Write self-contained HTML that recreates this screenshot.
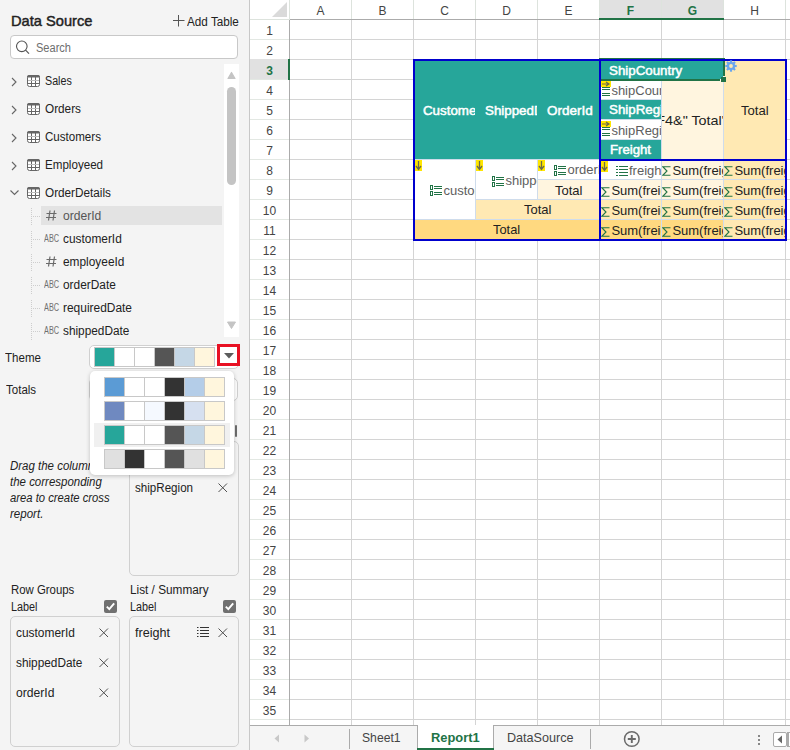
<!DOCTYPE html><html><head><meta charset="utf-8"><style>
html,body{margin:0;padding:0;width:790px;height:750px;overflow:hidden;background:#fff;font-family:"Liberation Sans",sans-serif;}
div{box-sizing:border-box;}
</style></head><body>
<div style="position:absolute;left:0px;top:0px;width:249px;height:750px;background:#f4f4f4;"></div>
<div style="position:absolute;left:249px;top:0px;width:1px;height:750px;background:#c8c8c8;"></div>
<div style="position:absolute;left:11.00px;top:12px;font-size:15px;line-height:17px;white-space:nowrap;color:#222;transform:scaleX(0.9760);transform-origin:0 0;-webkit-text-stroke:0.45px #222;">Data Source</div>
<svg style="position:absolute;left:172px;top:14px" width="14" height="14"><path d="M6.5 1V12.5M1 6.5H12.5" stroke="#555" stroke-width="1"/></svg>
<div style="position:absolute;left:187.00px;top:15px;font-size:12.5px;line-height:14px;white-space:nowrap;color:#222;transform:scaleX(0.9369);transform-origin:0 0;">Add Table</div>
<div style="position:absolute;left:10px;top:35px;width:228px;height:24px;background:#fff;border:1px solid #c8c8c8;border-radius:4px;"></div>
<svg style="position:absolute;left:14px;top:39px" width="18" height="18"><circle cx="7.8" cy="7.3" r="5.3" stroke="#555" stroke-width="1.1" fill="none"/><path d="M11.6 11.1L15 14.6" stroke="#555" stroke-width="1.2"/></svg>
<div style="position:absolute;left:36.00px;top:41px;font-size:12px;line-height:14px;white-space:nowrap;color:#6e6e6e;transform:scaleX(0.9211);transform-origin:0 0;">Search</div>
<div style="position:absolute;left:224px;top:64px;width:15px;height:273px;background:#fff;"></div>
<svg style="position:absolute;left:224px;top:64px" width="15" height="273"><path d="M4 14.5L7.5 8.5L11 14.5Z" fill="#c4c4c4" stroke="#c4c4c4" stroke-width="1.2" stroke-linejoin="round"/><rect x="3" y="23" width="9" height="98" rx="4.5" fill="#c4c4c4"/><path d="M3.5 258L7.5 264.5L11.5 258Z" fill="#c4c4c4" stroke="#c4c4c4" stroke-width="1" stroke-linejoin="round"/></svg>
<svg style="position:absolute;left:11px;top:77px" width="8" height="10"><path d="M1 1L5 5L1 9" stroke="#666" stroke-width="1.1" fill="none"/></svg>
<svg style="position:absolute;left:27px;top:75px" width="13" height="12"><rect x="0.5" y="0.5" width="12" height="11" rx="2" fill="#fff" stroke="#666" stroke-width="1"/><path d="M0 2.5V2A2 2 0 0 1 2 0H11A2 2 0 0 1 13 2V2.5Z" fill="#666"/><path d="M0.5 8.5H12.5M4.5 2V12M8.5 2V12" stroke="#666" stroke-width="1"/><path d="M1 5.5H12" stroke="#bbb" stroke-width="1"/></svg>
<div style="position:absolute;left:45.00px;top:74px;font-size:12.5px;line-height:14px;white-space:nowrap;color:#222;transform:scaleX(0.8576);transform-origin:0 0;">Sales</div>
<svg style="position:absolute;left:11px;top:105px" width="8" height="10"><path d="M1 1L5 5L1 9" stroke="#666" stroke-width="1.1" fill="none"/></svg>
<svg style="position:absolute;left:27px;top:103px" width="13" height="12"><rect x="0.5" y="0.5" width="12" height="11" rx="2" fill="#fff" stroke="#666" stroke-width="1"/><path d="M0 2.5V2A2 2 0 0 1 2 0H11A2 2 0 0 1 13 2V2.5Z" fill="#666"/><path d="M0.5 8.5H12.5M4.5 2V12M8.5 2V12" stroke="#666" stroke-width="1"/><path d="M1 5.5H12" stroke="#bbb" stroke-width="1"/></svg>
<div style="position:absolute;left:45.00px;top:102px;font-size:12.5px;line-height:14px;white-space:nowrap;color:#222;transform:scaleX(0.9412);transform-origin:0 0;">Orders</div>
<svg style="position:absolute;left:11px;top:133px" width="8" height="10"><path d="M1 1L5 5L1 9" stroke="#666" stroke-width="1.1" fill="none"/></svg>
<svg style="position:absolute;left:27px;top:131px" width="13" height="12"><rect x="0.5" y="0.5" width="12" height="11" rx="2" fill="#fff" stroke="#666" stroke-width="1"/><path d="M0 2.5V2A2 2 0 0 1 2 0H11A2 2 0 0 1 13 2V2.5Z" fill="#666"/><path d="M0.5 8.5H12.5M4.5 2V12M8.5 2V12" stroke="#666" stroke-width="1"/><path d="M1 5.5H12" stroke="#bbb" stroke-width="1"/></svg>
<div style="position:absolute;left:45.00px;top:130px;font-size:12.5px;line-height:14px;white-space:nowrap;color:#222;transform:scaleX(0.9256);transform-origin:0 0;">Customers</div>
<svg style="position:absolute;left:11px;top:161px" width="8" height="10"><path d="M1 1L5 5L1 9" stroke="#666" stroke-width="1.1" fill="none"/></svg>
<svg style="position:absolute;left:27px;top:159px" width="13" height="12"><rect x="0.5" y="0.5" width="12" height="11" rx="2" fill="#fff" stroke="#666" stroke-width="1"/><path d="M0 2.5V2A2 2 0 0 1 2 0H11A2 2 0 0 1 13 2V2.5Z" fill="#666"/><path d="M0.5 8.5H12.5M4.5 2V12M8.5 2V12" stroke="#666" stroke-width="1"/><path d="M1 5.5H12" stroke="#bbb" stroke-width="1"/></svg>
<div style="position:absolute;left:45.00px;top:158px;font-size:12.5px;line-height:14px;white-space:nowrap;color:#222;transform:scaleX(0.9280);transform-origin:0 0;">Employeed</div>
<svg style="position:absolute;left:10px;top:189px" width="12" height="8"><path d="M0.5 1.5L4.5 5.5L8.5 1.5" stroke="#666" stroke-width="1.1" fill="none"/></svg>
<svg style="position:absolute;left:27px;top:187px" width="13" height="12"><rect x="0.5" y="0.5" width="12" height="11" rx="2" fill="#fff" stroke="#666" stroke-width="1"/><path d="M0 2.5V2A2 2 0 0 1 2 0H11A2 2 0 0 1 13 2V2.5Z" fill="#666"/><path d="M0.5 8.5H12.5M4.5 2V12M8.5 2V12" stroke="#666" stroke-width="1"/><path d="M1 5.5H12" stroke="#bbb" stroke-width="1"/></svg>
<div style="position:absolute;left:45.00px;top:186px;font-size:12.5px;line-height:14px;white-space:nowrap;color:#222;transform:scaleX(0.9395);transform-origin:0 0;">OrderDetails</div>
<div style="position:absolute;left:41px;top:206px;width:181px;height:19px;background:#e3e3e3;"></div>
<div style="position:absolute;left:31px;top:208px;width:1px;height:17px;border-left:1px dotted #cdcdcd;"></div>
<div style="position:absolute;left:33px;top:216px;width:7px;height:1px;border-top:1px dotted #cdcdcd;"></div>
<svg style="position:absolute;left:46px;top:210px" width="11" height="11"><path d="M4 0.5L2.5 10.5M8.5 0.5L7 10.5M0.5 3.5H10.5M0 7.5H10" stroke="#6a6a6a" stroke-width="1.2"/></svg>
<div style="position:absolute;left:63.00px;top:209px;font-size:12.5px;line-height:14px;white-space:nowrap;color:#555;transform:scaleX(0.9671);transform-origin:0 0;">orderId</div>
<div style="position:absolute;left:31px;top:231px;width:1px;height:17px;border-left:1px dotted #cdcdcd;"></div>
<div style="position:absolute;left:33px;top:239px;width:7px;height:1px;border-top:1px dotted #cdcdcd;"></div>
<div style="position:absolute;left:44.00px;top:233px;font-size:10px;line-height:11px;white-space:nowrap;color:#707070;transform:scaleX(0.7317);transform-origin:0 0;">ABC</div>
<div style="position:absolute;left:63.00px;top:232px;font-size:12.5px;line-height:14px;white-space:nowrap;color:#222;transform:scaleX(0.9506);transform-origin:0 0;">customerId</div>
<div style="position:absolute;left:31px;top:254px;width:1px;height:17px;border-left:1px dotted #cdcdcd;"></div>
<div style="position:absolute;left:33px;top:262px;width:7px;height:1px;border-top:1px dotted #cdcdcd;"></div>
<svg style="position:absolute;left:46px;top:256px" width="11" height="11"><path d="M4 0.5L2.5 10.5M8.5 0.5L7 10.5M0.5 3.5H10.5M0 7.5H10" stroke="#6a6a6a" stroke-width="1.2"/></svg>
<div style="position:absolute;left:63.00px;top:255px;font-size:12.5px;line-height:14px;white-space:nowrap;color:#222;transform:scaleX(0.9498);transform-origin:0 0;">employeeId</div>
<div style="position:absolute;left:31px;top:277px;width:1px;height:17px;border-left:1px dotted #cdcdcd;"></div>
<div style="position:absolute;left:33px;top:285px;width:7px;height:1px;border-top:1px dotted #cdcdcd;"></div>
<div style="position:absolute;left:44.00px;top:279px;font-size:10px;line-height:11px;white-space:nowrap;color:#707070;transform:scaleX(0.7317);transform-origin:0 0;">ABC</div>
<div style="position:absolute;left:63.00px;top:278px;font-size:12.5px;line-height:14px;white-space:nowrap;color:#222;transform:scaleX(0.9514);transform-origin:0 0;">orderDate</div>
<div style="position:absolute;left:31px;top:300px;width:1px;height:17px;border-left:1px dotted #cdcdcd;"></div>
<div style="position:absolute;left:33px;top:308px;width:7px;height:1px;border-top:1px dotted #cdcdcd;"></div>
<div style="position:absolute;left:44.00px;top:302px;font-size:10px;line-height:11px;white-space:nowrap;color:#707070;transform:scaleX(0.7317);transform-origin:0 0;">ABC</div>
<div style="position:absolute;left:63.00px;top:301px;font-size:12.5px;line-height:14px;white-space:nowrap;color:#222;transform:scaleX(0.9550);transform-origin:0 0;">requiredDate</div>
<div style="position:absolute;left:31px;top:323px;width:1px;height:17px;border-left:1px dotted #cdcdcd;"></div>
<div style="position:absolute;left:33px;top:331px;width:7px;height:1px;border-top:1px dotted #cdcdcd;"></div>
<div style="position:absolute;left:44.00px;top:325px;font-size:10px;line-height:11px;white-space:nowrap;color:#707070;transform:scaleX(0.7317);transform-origin:0 0;">ABC</div>
<div style="position:absolute;left:63.00px;top:324px;font-size:12.5px;line-height:14px;white-space:nowrap;color:#222;transform:scaleX(0.9452);transform-origin:0 0;">shippedDate</div>
<div style="position:absolute;left:5.00px;top:351px;font-size:12.5px;line-height:14px;white-space:nowrap;color:#222;transform:scaleX(0.9231);transform-origin:0 0;">Theme</div>
<div style="position:absolute;left:89px;top:345px;width:150px;height:24px;background:#fff;border:1px solid #d0d0d0;border-radius:5px;"></div>
<div style="position:absolute;left:94px;top:347px;width:121px;height:20px;background:#c8c8c8;"></div>
<div style="position:absolute;left:95px;top:348px;width:19px;height:18px;background:#26a69a;"></div>
<div style="position:absolute;left:115px;top:348px;width:19px;height:18px;background:#ffffff;"></div>
<div style="position:absolute;left:135px;top:348px;width:19px;height:18px;background:#ffffff;"></div>
<div style="position:absolute;left:155px;top:348px;width:19px;height:18px;background:#555555;"></div>
<div style="position:absolute;left:175px;top:348px;width:19px;height:18px;background:#c5d7e6;"></div>
<div style="position:absolute;left:195px;top:348px;width:19px;height:18px;background:#fff6dd;"></div>
<div style="position:absolute;left:217px;top:344px;width:23px;height:22px;background:#fff;border:3px solid #e81123;"></div>
<svg style="position:absolute;left:223px;top:352px" width="12" height="8"><path d="M1 1H11L6 6.5Z" fill="#5c5c5c"/></svg>
<div style="position:absolute;left:6.00px;top:383px;font-size:12.5px;line-height:14px;white-space:nowrap;color:#222;transform:scaleX(0.9221);transform-origin:0 0;">Totals</div>
<div style="position:absolute;left:89px;top:378px;width:149px;height:23px;background:#fff;border:1px solid #d0d0d0;border-radius:5px;"></div>
<div style="position:absolute;left:235px;top:425px;width:2px;height:12px;background:#6e6e6e;border-radius:1px;"></div>
<div style="position:absolute;left:129px;top:441px;width:110px;height:135px;border:1px solid #d0d0d0;border-radius:5px;"></div>
<div style="position:absolute;left:135.00px;top:481px;font-size:12.5px;line-height:14px;white-space:nowrap;color:#222;transform:scaleX(0.9280);transform-origin:0 0;">shipRegion</div>
<svg style="position:absolute;left:218px;top:483px" width="10" height="10"><path d="M0.5 0.5L9 9M9 0.5L0.5 9" stroke="#505050" stroke-width="1"/></svg>
<div style="position:absolute;left:10.00px;top:459px;font-size:12.5px;line-height:14px;white-space:nowrap;color:#222;font-style:italic;transform:scaleX(0.9177);transform-origin:0 0;">Drag the columns to</div>
<div style="position:absolute;left:10.00px;top:475px;font-size:12.5px;line-height:14px;white-space:nowrap;color:#222;font-style:italic;transform:scaleX(0.9177);transform-origin:0 0;">the corresponding</div>
<div style="position:absolute;left:10.00px;top:491px;font-size:12.5px;line-height:14px;white-space:nowrap;color:#222;font-style:italic;transform:scaleX(0.9014);transform-origin:0 0;">area to create cross</div>
<div style="position:absolute;left:10.00px;top:507px;font-size:12.5px;line-height:14px;white-space:nowrap;color:#222;font-style:italic;transform:scaleX(0.9241);transform-origin:0 0;">report.</div>
<div style="position:absolute;left:90px;top:371px;width:144px;height:104px;background:#fff;border-radius:5px;box-shadow:0 1px 4px rgba(0,0,0,0.22);"></div>
<div style="position:absolute;left:94px;top:423px;width:136px;height:24px;background:#f0f0f0;"></div>
<div style="position:absolute;left:104px;top:377px;width:121px;height:20px;background:#c8c8c8;"></div>
<div style="position:absolute;left:105px;top:378px;width:19px;height:18px;background:#5b9bd5;"></div>
<div style="position:absolute;left:125px;top:378px;width:19px;height:18px;background:#ffffff;"></div>
<div style="position:absolute;left:145px;top:378px;width:19px;height:18px;background:#ffffff;"></div>
<div style="position:absolute;left:165px;top:378px;width:19px;height:18px;background:#333333;"></div>
<div style="position:absolute;left:185px;top:378px;width:19px;height:18px;background:#b4cde8;"></div>
<div style="position:absolute;left:205px;top:378px;width:19px;height:18px;background:#fff6dd;"></div>
<div style="position:absolute;left:104px;top:401px;width:121px;height:20px;background:#c8c8c8;"></div>
<div style="position:absolute;left:105px;top:402px;width:19px;height:18px;background:#6f89c0;"></div>
<div style="position:absolute;left:125px;top:402px;width:19px;height:18px;background:#ffffff;"></div>
<div style="position:absolute;left:145px;top:402px;width:19px;height:18px;background:#f5f9ff;"></div>
<div style="position:absolute;left:165px;top:402px;width:19px;height:18px;background:#333333;"></div>
<div style="position:absolute;left:185px;top:402px;width:19px;height:18px;background:#d6e0f0;"></div>
<div style="position:absolute;left:205px;top:402px;width:19px;height:18px;background:#fff6dd;"></div>
<div style="position:absolute;left:104px;top:425px;width:121px;height:20px;background:#c8c8c8;"></div>
<div style="position:absolute;left:105px;top:426px;width:19px;height:18px;background:#26a69a;"></div>
<div style="position:absolute;left:125px;top:426px;width:19px;height:18px;background:#ffffff;"></div>
<div style="position:absolute;left:145px;top:426px;width:19px;height:18px;background:#ffffff;"></div>
<div style="position:absolute;left:165px;top:426px;width:19px;height:18px;background:#555555;"></div>
<div style="position:absolute;left:185px;top:426px;width:19px;height:18px;background:#c5d7e6;"></div>
<div style="position:absolute;left:205px;top:426px;width:19px;height:18px;background:#fff6dd;"></div>
<div style="position:absolute;left:104px;top:449px;width:121px;height:20px;background:#c8c8c8;"></div>
<div style="position:absolute;left:105px;top:450px;width:19px;height:18px;background:#e0e0e0;"></div>
<div style="position:absolute;left:125px;top:450px;width:19px;height:18px;background:#333333;"></div>
<div style="position:absolute;left:145px;top:450px;width:19px;height:18px;background:#ffffff;"></div>
<div style="position:absolute;left:165px;top:450px;width:19px;height:18px;background:#555555;"></div>
<div style="position:absolute;left:185px;top:450px;width:19px;height:18px;background:#e0e0e0;"></div>
<div style="position:absolute;left:205px;top:450px;width:19px;height:18px;background:#fff6dd;"></div>
<div style="position:absolute;left:11.00px;top:583px;font-size:12.5px;line-height:14px;white-space:nowrap;color:#222;transform:scaleX(0.9108);transform-origin:0 0;">Row Groups</div>
<div style="position:absolute;left:11.00px;top:600px;font-size:12.5px;line-height:14px;white-space:nowrap;color:#222;transform:scaleX(0.8656);transform-origin:0 0;">Label</div>
<div style="position:absolute;left:104px;top:600px;width:13px;height:13px;background:#707070;border-radius:2px;"></div>
<svg style="position:absolute;left:104px;top:600px" width="13" height="13"><path d="M2.8 6.6L5.3 9.2L10.2 3.3" stroke="#fff" stroke-width="1.9" fill="none"/></svg>
<div style="position:absolute;left:10px;top:616px;width:110px;height:131px;border:1px solid #d0d0d0;border-radius:5px;"></div>
<div style="position:absolute;left:16.00px;top:626px;font-size:12.5px;line-height:14px;white-space:nowrap;color:#222;transform:scaleX(0.9538);transform-origin:0 0;">customerId</div>
<svg style="position:absolute;left:99px;top:628px" width="10" height="10"><path d="M0.5 0.5L9 9M9 0.5L0.5 9" stroke="#505050" stroke-width="1"/></svg>
<div style="position:absolute;left:16.00px;top:656px;font-size:12.5px;line-height:14px;white-space:nowrap;color:#222;transform:scaleX(0.9452);transform-origin:0 0;">shippedDate</div>
<svg style="position:absolute;left:99px;top:658px" width="10" height="10"><path d="M0.5 0.5L9 9M9 0.5L0.5 9" stroke="#505050" stroke-width="1"/></svg>
<div style="position:absolute;left:16.00px;top:686px;font-size:12.5px;line-height:14px;white-space:nowrap;color:#222;transform:scaleX(0.9696);transform-origin:0 0;">orderId</div>
<svg style="position:absolute;left:99px;top:688px" width="10" height="10"><path d="M0.5 0.5L9 9M9 0.5L0.5 9" stroke="#505050" stroke-width="1"/></svg>
<div style="position:absolute;left:130.00px;top:583px;font-size:12.5px;line-height:14px;white-space:nowrap;color:#222;transform:scaleX(0.9429);transform-origin:0 0;">List / Summary</div>
<div style="position:absolute;left:130.00px;top:600px;font-size:12.5px;line-height:14px;white-space:nowrap;color:#222;transform:scaleX(0.8656);transform-origin:0 0;">Label</div>
<div style="position:absolute;left:223px;top:600px;width:13px;height:13px;background:#707070;border-radius:2px;"></div>
<svg style="position:absolute;left:223px;top:600px" width="13" height="13"><path d="M2.8 6.6L5.3 9.2L10.2 3.3" stroke="#fff" stroke-width="1.9" fill="none"/></svg>
<div style="position:absolute;left:129px;top:616px;width:110px;height:131px;border:1px solid #d0d0d0;border-radius:5px;"></div>
<div style="position:absolute;left:135.00px;top:626px;font-size:12.5px;line-height:14px;white-space:nowrap;color:#222;transform:scaleX(1.0072);transform-origin:0 0;">freight</div>
<svg style="position:absolute;left:196px;top:626px" width="14" height="12"><path d="M1 1.5H2.5M1 4.5H2.5M1 7.5H2.5M1 10.5H2.5M4 1.5H13M4 4.5H13M4 7.5H13M4 10.5H13" stroke="#333" stroke-width="1"/></svg>
<svg style="position:absolute;left:218px;top:628px" width="10" height="10"><path d="M0.5 0.5L9 9M9 0.5L0.5 9" stroke="#505050" stroke-width="1"/></svg>
<div style="position:absolute;left:250px;top:0px;width:540px;height:725px;background:#fff;"></div>
<div style="position:absolute;left:599px;top:0px;width:125px;height:18px;background:#e1e1e1;"></div>
<div style="position:absolute;left:289px;top:0px;width:1px;height:19px;background:#dde3dd;"></div>
<div style="position:absolute;left:351px;top:0px;width:1px;height:19px;background:#dde3dd;"></div>
<div style="position:absolute;left:413px;top:0px;width:1px;height:19px;background:#dde3dd;"></div>
<div style="position:absolute;left:475px;top:0px;width:1px;height:19px;background:#dde3dd;"></div>
<div style="position:absolute;left:537px;top:0px;width:1px;height:19px;background:#dde3dd;"></div>
<div style="position:absolute;left:599px;top:0px;width:1px;height:19px;background:#dde3dd;"></div>
<div style="position:absolute;left:661px;top:0px;width:1px;height:19px;background:#dde3dd;"></div>
<div style="position:absolute;left:723px;top:0px;width:1px;height:19px;background:#dde3dd;"></div>
<div style="position:absolute;left:785px;top:0px;width:1px;height:19px;background:#dde3dd;"></div>
<div style="position:absolute;left:250px;top:19px;width:40px;height:1px;background:#dde3dd;"></div>
<div style="position:absolute;left:290px;top:19px;width:500px;height:1px;background:#ababab;"></div>
<div style="position:absolute;left:599px;top:18px;width:125px;height:2px;background:#217346;"></div>
<div style="position:absolute;left:290px;top:5px;width:61px;font-size:12px;line-height:12px;text-align:center;color:#444;">A</div>
<div style="position:absolute;left:352px;top:5px;width:61px;font-size:12px;line-height:12px;text-align:center;color:#444;">B</div>
<div style="position:absolute;left:414px;top:5px;width:61px;font-size:12px;line-height:12px;text-align:center;color:#444;">C</div>
<div style="position:absolute;left:476px;top:5px;width:61px;font-size:12px;line-height:12px;text-align:center;color:#444;">D</div>
<div style="position:absolute;left:538px;top:5px;width:61px;font-size:12px;line-height:12px;text-align:center;color:#444;">E</div>
<div style="position:absolute;left:600px;top:5px;width:61px;font-size:12px;line-height:12px;text-align:center;color:#217346;font-weight:bold;">F</div>
<div style="position:absolute;left:662px;top:5px;width:61px;font-size:12px;line-height:12px;text-align:center;color:#217346;font-weight:bold;">G</div>
<div style="position:absolute;left:724px;top:5px;width:61px;font-size:12px;line-height:12px;text-align:center;color:#444;">H</div>
<svg style="position:absolute;left:271px;top:2px" width="17" height="16"><path d="M1 15H16V0Z" fill="#dadada"/></svg>
<div style="position:absolute;left:290px;top:39px;width:500px;height:1px;background:#d4d4d4;"></div>
<div style="position:absolute;left:250px;top:39px;width:39px;height:1px;background:#e3e8e3;"></div>
<div style="position:absolute;left:290px;top:59px;width:500px;height:1px;background:#d4d4d4;"></div>
<div style="position:absolute;left:250px;top:59px;width:39px;height:1px;background:#e3e8e3;"></div>
<div style="position:absolute;left:290px;top:79px;width:500px;height:1px;background:#d4d4d4;"></div>
<div style="position:absolute;left:250px;top:79px;width:39px;height:1px;background:#e3e8e3;"></div>
<div style="position:absolute;left:290px;top:99px;width:500px;height:1px;background:#d4d4d4;"></div>
<div style="position:absolute;left:250px;top:99px;width:39px;height:1px;background:#e3e8e3;"></div>
<div style="position:absolute;left:290px;top:119px;width:500px;height:1px;background:#d4d4d4;"></div>
<div style="position:absolute;left:250px;top:119px;width:39px;height:1px;background:#e3e8e3;"></div>
<div style="position:absolute;left:290px;top:139px;width:500px;height:1px;background:#d4d4d4;"></div>
<div style="position:absolute;left:250px;top:139px;width:39px;height:1px;background:#e3e8e3;"></div>
<div style="position:absolute;left:290px;top:159px;width:500px;height:1px;background:#d4d4d4;"></div>
<div style="position:absolute;left:250px;top:159px;width:39px;height:1px;background:#e3e8e3;"></div>
<div style="position:absolute;left:290px;top:179px;width:500px;height:1px;background:#d4d4d4;"></div>
<div style="position:absolute;left:250px;top:179px;width:39px;height:1px;background:#e3e8e3;"></div>
<div style="position:absolute;left:290px;top:199px;width:500px;height:1px;background:#d4d4d4;"></div>
<div style="position:absolute;left:250px;top:199px;width:39px;height:1px;background:#e3e8e3;"></div>
<div style="position:absolute;left:290px;top:219px;width:500px;height:1px;background:#d4d4d4;"></div>
<div style="position:absolute;left:250px;top:219px;width:39px;height:1px;background:#e3e8e3;"></div>
<div style="position:absolute;left:290px;top:239px;width:500px;height:1px;background:#d4d4d4;"></div>
<div style="position:absolute;left:250px;top:239px;width:39px;height:1px;background:#e3e8e3;"></div>
<div style="position:absolute;left:290px;top:259px;width:500px;height:1px;background:#d4d4d4;"></div>
<div style="position:absolute;left:250px;top:259px;width:39px;height:1px;background:#e3e8e3;"></div>
<div style="position:absolute;left:290px;top:279px;width:500px;height:1px;background:#d4d4d4;"></div>
<div style="position:absolute;left:250px;top:279px;width:39px;height:1px;background:#e3e8e3;"></div>
<div style="position:absolute;left:290px;top:299px;width:500px;height:1px;background:#d4d4d4;"></div>
<div style="position:absolute;left:250px;top:299px;width:39px;height:1px;background:#e3e8e3;"></div>
<div style="position:absolute;left:290px;top:319px;width:500px;height:1px;background:#d4d4d4;"></div>
<div style="position:absolute;left:250px;top:319px;width:39px;height:1px;background:#e3e8e3;"></div>
<div style="position:absolute;left:290px;top:339px;width:500px;height:1px;background:#d4d4d4;"></div>
<div style="position:absolute;left:250px;top:339px;width:39px;height:1px;background:#e3e8e3;"></div>
<div style="position:absolute;left:290px;top:359px;width:500px;height:1px;background:#d4d4d4;"></div>
<div style="position:absolute;left:250px;top:359px;width:39px;height:1px;background:#e3e8e3;"></div>
<div style="position:absolute;left:290px;top:379px;width:500px;height:1px;background:#d4d4d4;"></div>
<div style="position:absolute;left:250px;top:379px;width:39px;height:1px;background:#e3e8e3;"></div>
<div style="position:absolute;left:290px;top:399px;width:500px;height:1px;background:#d4d4d4;"></div>
<div style="position:absolute;left:250px;top:399px;width:39px;height:1px;background:#e3e8e3;"></div>
<div style="position:absolute;left:290px;top:419px;width:500px;height:1px;background:#d4d4d4;"></div>
<div style="position:absolute;left:250px;top:419px;width:39px;height:1px;background:#e3e8e3;"></div>
<div style="position:absolute;left:290px;top:439px;width:500px;height:1px;background:#d4d4d4;"></div>
<div style="position:absolute;left:250px;top:439px;width:39px;height:1px;background:#e3e8e3;"></div>
<div style="position:absolute;left:290px;top:459px;width:500px;height:1px;background:#d4d4d4;"></div>
<div style="position:absolute;left:250px;top:459px;width:39px;height:1px;background:#e3e8e3;"></div>
<div style="position:absolute;left:290px;top:479px;width:500px;height:1px;background:#d4d4d4;"></div>
<div style="position:absolute;left:250px;top:479px;width:39px;height:1px;background:#e3e8e3;"></div>
<div style="position:absolute;left:290px;top:499px;width:500px;height:1px;background:#d4d4d4;"></div>
<div style="position:absolute;left:250px;top:499px;width:39px;height:1px;background:#e3e8e3;"></div>
<div style="position:absolute;left:290px;top:519px;width:500px;height:1px;background:#d4d4d4;"></div>
<div style="position:absolute;left:250px;top:519px;width:39px;height:1px;background:#e3e8e3;"></div>
<div style="position:absolute;left:290px;top:539px;width:500px;height:1px;background:#d4d4d4;"></div>
<div style="position:absolute;left:250px;top:539px;width:39px;height:1px;background:#e3e8e3;"></div>
<div style="position:absolute;left:290px;top:559px;width:500px;height:1px;background:#d4d4d4;"></div>
<div style="position:absolute;left:250px;top:559px;width:39px;height:1px;background:#e3e8e3;"></div>
<div style="position:absolute;left:290px;top:579px;width:500px;height:1px;background:#d4d4d4;"></div>
<div style="position:absolute;left:250px;top:579px;width:39px;height:1px;background:#e3e8e3;"></div>
<div style="position:absolute;left:290px;top:599px;width:500px;height:1px;background:#d4d4d4;"></div>
<div style="position:absolute;left:250px;top:599px;width:39px;height:1px;background:#e3e8e3;"></div>
<div style="position:absolute;left:290px;top:619px;width:500px;height:1px;background:#d4d4d4;"></div>
<div style="position:absolute;left:250px;top:619px;width:39px;height:1px;background:#e3e8e3;"></div>
<div style="position:absolute;left:290px;top:639px;width:500px;height:1px;background:#d4d4d4;"></div>
<div style="position:absolute;left:250px;top:639px;width:39px;height:1px;background:#e3e8e3;"></div>
<div style="position:absolute;left:290px;top:659px;width:500px;height:1px;background:#d4d4d4;"></div>
<div style="position:absolute;left:250px;top:659px;width:39px;height:1px;background:#e3e8e3;"></div>
<div style="position:absolute;left:290px;top:679px;width:500px;height:1px;background:#d4d4d4;"></div>
<div style="position:absolute;left:250px;top:679px;width:39px;height:1px;background:#e3e8e3;"></div>
<div style="position:absolute;left:290px;top:699px;width:500px;height:1px;background:#d4d4d4;"></div>
<div style="position:absolute;left:250px;top:699px;width:39px;height:1px;background:#e3e8e3;"></div>
<div style="position:absolute;left:290px;top:719px;width:500px;height:1px;background:#d4d4d4;"></div>
<div style="position:absolute;left:250px;top:719px;width:39px;height:1px;background:#e3e8e3;"></div>
<div style="position:absolute;left:351px;top:20px;width:1px;height:705px;background:#d4d4d4;"></div>
<div style="position:absolute;left:413px;top:20px;width:1px;height:705px;background:#d4d4d4;"></div>
<div style="position:absolute;left:475px;top:20px;width:1px;height:705px;background:#d4d4d4;"></div>
<div style="position:absolute;left:537px;top:20px;width:1px;height:705px;background:#d4d4d4;"></div>
<div style="position:absolute;left:599px;top:20px;width:1px;height:705px;background:#d4d4d4;"></div>
<div style="position:absolute;left:661px;top:20px;width:1px;height:705px;background:#d4d4d4;"></div>
<div style="position:absolute;left:723px;top:20px;width:1px;height:705px;background:#d4d4d4;"></div>
<div style="position:absolute;left:785px;top:20px;width:1px;height:705px;background:#d4d4d4;"></div>
<div style="position:absolute;left:289px;top:20px;width:1px;height:705px;background:#ababab;"></div>
<div style="position:absolute;left:250px;top:59px;width:38px;height:20px;background:#e1e1e1;"></div>
<div style="position:absolute;left:288px;top:59px;width:2px;height:21px;background:#217346;"></div>
<div style="position:absolute;left:250px;top:25px;width:39px;font-size:12px;line-height:12px;text-align:center;color:#444;">1</div>
<div style="position:absolute;left:250px;top:45px;width:39px;font-size:12px;line-height:12px;text-align:center;color:#444;">2</div>
<div style="position:absolute;left:250px;top:65px;width:39px;font-size:12px;line-height:12px;text-align:center;color:#217346;font-weight:bold;">3</div>
<div style="position:absolute;left:250px;top:85px;width:39px;font-size:12px;line-height:12px;text-align:center;color:#444;">4</div>
<div style="position:absolute;left:250px;top:105px;width:39px;font-size:12px;line-height:12px;text-align:center;color:#444;">5</div>
<div style="position:absolute;left:250px;top:125px;width:39px;font-size:12px;line-height:12px;text-align:center;color:#444;">6</div>
<div style="position:absolute;left:250px;top:145px;width:39px;font-size:12px;line-height:12px;text-align:center;color:#444;">7</div>
<div style="position:absolute;left:250px;top:165px;width:39px;font-size:12px;line-height:12px;text-align:center;color:#444;">8</div>
<div style="position:absolute;left:250px;top:185px;width:39px;font-size:12px;line-height:12px;text-align:center;color:#444;">9</div>
<div style="position:absolute;left:250px;top:205px;width:39px;font-size:12px;line-height:12px;text-align:center;color:#444;">10</div>
<div style="position:absolute;left:250px;top:225px;width:39px;font-size:12px;line-height:12px;text-align:center;color:#444;">11</div>
<div style="position:absolute;left:250px;top:245px;width:39px;font-size:12px;line-height:12px;text-align:center;color:#444;">12</div>
<div style="position:absolute;left:250px;top:265px;width:39px;font-size:12px;line-height:12px;text-align:center;color:#444;">13</div>
<div style="position:absolute;left:250px;top:285px;width:39px;font-size:12px;line-height:12px;text-align:center;color:#444;">14</div>
<div style="position:absolute;left:250px;top:305px;width:39px;font-size:12px;line-height:12px;text-align:center;color:#444;">15</div>
<div style="position:absolute;left:250px;top:325px;width:39px;font-size:12px;line-height:12px;text-align:center;color:#444;">16</div>
<div style="position:absolute;left:250px;top:345px;width:39px;font-size:12px;line-height:12px;text-align:center;color:#444;">17</div>
<div style="position:absolute;left:250px;top:365px;width:39px;font-size:12px;line-height:12px;text-align:center;color:#444;">18</div>
<div style="position:absolute;left:250px;top:385px;width:39px;font-size:12px;line-height:12px;text-align:center;color:#444;">19</div>
<div style="position:absolute;left:250px;top:405px;width:39px;font-size:12px;line-height:12px;text-align:center;color:#444;">20</div>
<div style="position:absolute;left:250px;top:425px;width:39px;font-size:12px;line-height:12px;text-align:center;color:#444;">21</div>
<div style="position:absolute;left:250px;top:445px;width:39px;font-size:12px;line-height:12px;text-align:center;color:#444;">22</div>
<div style="position:absolute;left:250px;top:465px;width:39px;font-size:12px;line-height:12px;text-align:center;color:#444;">23</div>
<div style="position:absolute;left:250px;top:485px;width:39px;font-size:12px;line-height:12px;text-align:center;color:#444;">24</div>
<div style="position:absolute;left:250px;top:505px;width:39px;font-size:12px;line-height:12px;text-align:center;color:#444;">25</div>
<div style="position:absolute;left:250px;top:525px;width:39px;font-size:12px;line-height:12px;text-align:center;color:#444;">26</div>
<div style="position:absolute;left:250px;top:545px;width:39px;font-size:12px;line-height:12px;text-align:center;color:#444;">27</div>
<div style="position:absolute;left:250px;top:565px;width:39px;font-size:12px;line-height:12px;text-align:center;color:#444;">28</div>
<div style="position:absolute;left:250px;top:585px;width:39px;font-size:12px;line-height:12px;text-align:center;color:#444;">29</div>
<div style="position:absolute;left:250px;top:605px;width:39px;font-size:12px;line-height:12px;text-align:center;color:#444;">30</div>
<div style="position:absolute;left:250px;top:625px;width:39px;font-size:12px;line-height:12px;text-align:center;color:#444;">31</div>
<div style="position:absolute;left:250px;top:645px;width:39px;font-size:12px;line-height:12px;text-align:center;color:#444;">32</div>
<div style="position:absolute;left:250px;top:665px;width:39px;font-size:12px;line-height:12px;text-align:center;color:#444;">33</div>
<div style="position:absolute;left:250px;top:685px;width:39px;font-size:12px;line-height:12px;text-align:center;color:#444;">34</div>
<div style="position:absolute;left:250px;top:705px;width:39px;font-size:12px;line-height:12px;text-align:center;color:#444;">35</div>
<div style="position:absolute;left:413px;top:59px;width:374px;height:182px;background:#cfdceb;"></div>
<div style="position:absolute;left:415px;top:61px;width:184px;height:98px;background:#26a69a;"></div>
<div style="position:absolute;left:601px;top:61px;width:122px;height:18px;background:#26a69a;"></div>
<div style="position:absolute;left:601px;top:81px;width:60px;height:18px;background:#fff;"></div>
<div style="position:absolute;left:601px;top:100px;width:60px;height:19px;background:#26a69a;"></div>
<div style="position:absolute;left:601px;top:120px;width:60px;height:19px;background:#fff;"></div>
<div style="position:absolute;left:601px;top:140px;width:60px;height:19px;background:#26a69a;"></div>
<div style="position:absolute;left:662px;top:81px;width:61px;height:78px;background:#fff5df;"></div>
<div style="position:absolute;left:724px;top:61px;width:61px;height:98px;background:#ffe9b3;"></div>
<div style="position:absolute;left:415px;top:160px;width:60px;height:59px;background:#fff;"></div>
<div style="position:absolute;left:476px;top:160px;width:61px;height:39px;background:#fff;"></div>
<div style="position:absolute;left:538px;top:160px;width:61px;height:19px;background:#fff;"></div>
<div style="position:absolute;left:538px;top:180px;width:61px;height:19px;background:#fff5df;"></div>
<div style="position:absolute;left:476px;top:200px;width:123px;height:19px;background:#ffe9b3;"></div>
<div style="position:absolute;left:415px;top:220px;width:184px;height:19px;background:#ffd980;"></div>
<div style="position:absolute;left:601px;top:161px;width:60px;height:18px;background:#fff;"></div>
<div style="position:absolute;left:662px;top:161px;width:61px;height:18px;background:#fff5df;"></div>
<div style="position:absolute;left:724px;top:161px;width:61px;height:18px;background:#ffe9b3;"></div>
<div style="position:absolute;left:601px;top:180px;width:60px;height:19px;background:#fff5df;"></div>
<div style="position:absolute;left:662px;top:180px;width:61px;height:19px;background:#fff5df;"></div>
<div style="position:absolute;left:724px;top:180px;width:61px;height:19px;background:#ffe9b3;"></div>
<div style="position:absolute;left:601px;top:200px;width:60px;height:19px;background:#ffe9b3;"></div>
<div style="position:absolute;left:662px;top:200px;width:61px;height:19px;background:#ffe9b3;"></div>
<div style="position:absolute;left:724px;top:200px;width:61px;height:19px;background:#ffe9b3;"></div>
<div style="position:absolute;left:601px;top:220px;width:60px;height:19px;background:#ffd980;"></div>
<div style="position:absolute;left:662px;top:220px;width:61px;height:19px;background:#ffd980;"></div>
<div style="position:absolute;left:724px;top:220px;width:61px;height:19px;background:#ffe9b3;"></div>
<div style="position:absolute;left:599px;top:58px;width:126px;height:1px;background:#217346;"></div>
<div style="position:absolute;left:723px;top:58px;width:2px;height:18px;background:#217346;"></div>
<div style="position:absolute;left:601px;top:79px;width:119px;height:2px;background:#217346;"></div>
<div style="position:absolute;left:720px;top:79px;width:1px;height:2px;background:#fdf6e6;"></div>
<div style="position:absolute;left:723px;top:76px;width:2px;height:1px;background:#fdf6e6;"></div>
<div style="position:absolute;left:721px;top:77px;width:5px;height:5px;background:#217346;"></div>
<div style="position:absolute;left:413px;top:59px;width:374px;height:2px;background:#0000cd;"></div>
<div style="position:absolute;left:413px;top:239px;width:374px;height:2px;background:#0000cd;"></div>
<div style="position:absolute;left:413px;top:59px;width:2px;height:182px;background:#0000cd;"></div>
<div style="position:absolute;left:785px;top:59px;width:2px;height:182px;background:#0000cd;"></div>
<div style="position:absolute;left:599px;top:59px;width:2px;height:182px;background:#0000cd;"></div>
<div style="position:absolute;left:599px;top:159px;width:188px;height:2px;background:#0000cd;"></div>
<div style="position:absolute;left:415px;top:61px;width:60px;height:98px;overflow:hidden;"><div style="position:absolute;left:8.40px;top:42px;font-size:13px;line-height:15px;white-space:nowrap;color:#fff;transform:scaleX(1.0251);transform-origin:0 0;-webkit-text-stroke:0.5px #fff;">Customer</div></div>
<div style="position:absolute;left:476px;top:61px;width:61px;height:98px;overflow:hidden;"><div style="position:absolute;left:9.00px;top:42px;font-size:13px;line-height:15px;white-space:nowrap;color:#fff;transform:scaleX(1.0250);transform-origin:0 0;-webkit-text-stroke:0.5px #fff;">ShippedDate</div></div>
<div style="position:absolute;left:538px;top:61px;width:61px;height:98px;overflow:hidden;"><div style="position:absolute;left:9.40px;top:42px;font-size:13px;line-height:15px;white-space:nowrap;color:#fff;transform:scaleX(1.0364);transform-origin:0 0;-webkit-text-stroke:0.5px #fff;">OrderId</div></div>
<div style="position:absolute;left:601px;top:61px;width:121px;height:18px;overflow:hidden;"><div style="position:absolute;left:8.00px;top:2px;font-size:13px;line-height:15px;white-space:nowrap;color:#fff;transform:scaleX(1.0238);transform-origin:0 0;-webkit-text-stroke:0.5px #fff;">ShipCountry</div></div>
<div style="position:absolute;left:601px;top:100px;width:60px;height:19px;overflow:hidden;"><div style="position:absolute;left:8.00px;top:2px;font-size:13px;line-height:15px;white-space:nowrap;color:#fff;transform:scaleX(1.0250);transform-origin:0 0;-webkit-text-stroke:0.5px #fff;">ShipRegion</div></div>
<div style="position:absolute;left:601px;top:140px;width:60px;height:19px;overflow:hidden;"><div style="position:absolute;left:8.50px;top:2px;font-size:13px;line-height:15px;white-space:nowrap;color:#fff;transform:scaleX(1.0123);transform-origin:0 0;-webkit-text-stroke:0.5px #fff;">Freight</div></div>
<div style="position:absolute;left:611px;top:81px;width:50px;height:18px;overflow:hidden;"><div style="position:absolute;left:0.40px;top:2px;font-size:13px;line-height:15px;white-space:nowrap;color:#5e5e5e;">shipCountry</div></div>
<div style="position:absolute;left:611px;top:119px;width:50px;height:20px;overflow:hidden;"><div style="position:absolute;left:0.40px;top:4px;font-size:13px;line-height:15px;white-space:nowrap;color:#5e5e5e;">shipRegion</div></div>
<div style="position:absolute;left:662px;top:81px;width:61px;height:78px;overflow:hidden;"><div style="position:absolute;left:-14.12px;top:32px;font-size:13px;line-height:15px;color:#222;white-space:nowrap;transform:scaleX(1.1022);transform-origin:0 0;">=F4&amp;" Total"</div></div>
<div style="position:absolute;left:740.60px;top:103px;font-size:13px;line-height:15px;white-space:nowrap;color:#222;transform:scaleX(1.0073);transform-origin:0 0;">Total</div>
<svg style="position:absolute;left:601px;top:81px" width="10" height="6"><rect width="10" height="6" fill="#ffe600"/><path d="M1 3H7M5 1L8 3L5 5" stroke="#6b6b4a" stroke-width="1.2" fill="none"/></svg>
<svg style="position:absolute;left:602px;top:87px" width="9" height="10"><path d="M0 0.5H8M0 2.5H8M0 6.5H8M0 8.5H8" stroke="#217346" stroke-width="1"/></svg>
<svg style="position:absolute;left:601px;top:121px" width="10" height="6"><rect width="10" height="6" fill="#ffe600"/><path d="M1 3H7M5 1L8 3L5 5" stroke="#6b6b4a" stroke-width="1.2" fill="none"/></svg>
<svg style="position:absolute;left:602px;top:127px" width="9" height="10"><path d="M0 0.5H8M0 2.5H8M0 6.5H8M0 8.5H8" stroke="#217346" stroke-width="1"/></svg>
<svg style="position:absolute;left:415px;top:160px" width="7" height="11"><rect width="7" height="11" fill="#ffe600"/><path d="M3.5 1V9M1 6L3.5 9.5L6 6" stroke="#6b6b4a" stroke-width="1.3" fill="none"/></svg>
<svg style="position:absolute;left:476px;top:160px" width="7" height="11"><rect width="7" height="11" fill="#ffe600"/><path d="M3.5 1V9M1 6L3.5 9.5L6 6" stroke="#6b6b4a" stroke-width="1.3" fill="none"/></svg>
<svg style="position:absolute;left:538px;top:160px" width="7" height="11"><rect width="7" height="11" fill="#ffe600"/><path d="M3.5 1V9M1 6L3.5 9.5L6 6" stroke="#6b6b4a" stroke-width="1.3" fill="none"/></svg>
<svg style="position:absolute;left:601px;top:161px" width="7" height="11"><rect width="7" height="11" fill="#ffe600"/><path d="M3.5 1V9M1 6L3.5 9.5L6 6" stroke="#6b6b4a" stroke-width="1.3" fill="none"/></svg>
<svg style="position:absolute;left:430px;top:185px" width="13" height="12"><rect x="0.5" y="0.5" width="2" height="4" fill="none" stroke="#217346" stroke-width="1"/><rect x="0.5" y="6.5" width="2" height="4" fill="none" stroke="#217346" stroke-width="1"/><path d="M4 1.5H12M4 3.5H12M4 7.5H12M4 9.5H12" stroke="#217346" stroke-width="1"/></svg>
<div style="position:absolute;left:415px;top:160px;width:60px;height:59px;overflow:hidden;"><div style="position:absolute;left:28.50px;top:23px;font-size:13px;line-height:15px;white-space:nowrap;color:#5e5e5e;">customerId</div></div>
<svg style="position:absolute;left:492px;top:176px" width="13" height="12"><rect x="0.5" y="0.5" width="2" height="4" fill="none" stroke="#217346" stroke-width="1"/><rect x="0.5" y="6.5" width="2" height="4" fill="none" stroke="#217346" stroke-width="1"/><path d="M4 1.5H12M4 3.5H12M4 7.5H12M4 9.5H12" stroke="#217346" stroke-width="1"/></svg>
<div style="position:absolute;left:476px;top:160px;width:61px;height:39px;overflow:hidden;"><div style="position:absolute;left:29.50px;top:13px;font-size:13px;line-height:15px;white-space:nowrap;color:#5e5e5e;">shippedDate</div></div>
<svg style="position:absolute;left:554px;top:165px" width="13" height="12"><rect x="0.5" y="0.5" width="2" height="4" fill="none" stroke="#217346" stroke-width="1"/><rect x="0.5" y="6.5" width="2" height="4" fill="none" stroke="#217346" stroke-width="1"/><path d="M4 1.5H12M4 3.5H12M4 7.5H12M4 9.5H12" stroke="#217346" stroke-width="1"/></svg>
<div style="position:absolute;left:538px;top:160px;width:61px;height:19px;overflow:hidden;"><div style="position:absolute;left:29.50px;top:2px;font-size:13px;line-height:15px;white-space:nowrap;color:#5e5e5e;">orderId</div></div>
<div style="position:absolute;left:555.00px;top:183px;font-size:13px;line-height:15px;white-space:nowrap;color:#222;">Total</div>
<div style="position:absolute;left:524.00px;top:202px;font-size:13px;line-height:15px;white-space:nowrap;color:#222;">Total</div>
<div style="position:absolute;left:493.30px;top:222px;font-size:13px;line-height:15px;white-space:nowrap;color:#222;transform:scaleX(0.9891);transform-origin:0 0;">Total</div>
<svg style="position:absolute;left:616px;top:166px" width="12" height="10"><path d="M0 0.5H2M0 3.5H2M0 6.5H2M0 9.5H2M3 0.5H12M3 3.5H12M3 6.5H12M3 9.5H12" stroke="#217346" stroke-width="1"/></svg>
<div style="position:absolute;left:601px;top:161px;width:60px;height:18px;overflow:hidden;"><div style="position:absolute;left:28.00px;top:2px;font-size:13px;line-height:15px;white-space:nowrap;color:#5e5e5e;">freight</div></div>
<svg style="position:absolute;left:662px;top:166px" width="9" height="10"><path d="M8.5 0.7H0.8L5 5L0.8 9.3H8.5" stroke="#217346" stroke-width="1.1" fill="none"/></svg>
<div style="position:absolute;left:662px;top:161px;width:61px;height:18px;overflow:hidden;"><div style="position:absolute;left:10.40px;top:2px;font-size:13px;line-height:15px;white-space:nowrap;color:#222;">Sum(freight)</div></div>
<svg style="position:absolute;left:724px;top:166px" width="9" height="10"><path d="M8.5 0.7H0.8L5 5L0.8 9.3H8.5" stroke="#217346" stroke-width="1.1" fill="none"/></svg>
<div style="position:absolute;left:724px;top:161px;width:61px;height:18px;overflow:hidden;"><div style="position:absolute;left:10.40px;top:2px;font-size:13px;line-height:15px;white-space:nowrap;color:#222;">Sum(freight)</div></div>
<svg style="position:absolute;left:601px;top:187px" width="9" height="10"><path d="M8.5 0.7H0.8L5 5L0.8 9.3H8.5" stroke="#217346" stroke-width="1.1" fill="none"/></svg>
<div style="position:absolute;left:601px;top:180px;width:60px;height:19px;overflow:hidden;"><div style="position:absolute;left:10.40px;top:3px;font-size:13px;line-height:15px;white-space:nowrap;color:#222;">Sum(freight)</div></div>
<svg style="position:absolute;left:662px;top:187px" width="9" height="10"><path d="M8.5 0.7H0.8L5 5L0.8 9.3H8.5" stroke="#217346" stroke-width="1.1" fill="none"/></svg>
<div style="position:absolute;left:662px;top:180px;width:61px;height:19px;overflow:hidden;"><div style="position:absolute;left:10.40px;top:3px;font-size:13px;line-height:15px;white-space:nowrap;color:#222;">Sum(freight)</div></div>
<svg style="position:absolute;left:724px;top:187px" width="9" height="10"><path d="M8.5 0.7H0.8L5 5L0.8 9.3H8.5" stroke="#217346" stroke-width="1.1" fill="none"/></svg>
<div style="position:absolute;left:724px;top:180px;width:61px;height:19px;overflow:hidden;"><div style="position:absolute;left:10.40px;top:3px;font-size:13px;line-height:15px;white-space:nowrap;color:#222;">Sum(freight)</div></div>
<svg style="position:absolute;left:601px;top:207px" width="9" height="10"><path d="M8.5 0.7H0.8L5 5L0.8 9.3H8.5" stroke="#217346" stroke-width="1.1" fill="none"/></svg>
<div style="position:absolute;left:601px;top:200px;width:60px;height:19px;overflow:hidden;"><div style="position:absolute;left:10.40px;top:3px;font-size:13px;line-height:15px;white-space:nowrap;color:#222;">Sum(freight)</div></div>
<svg style="position:absolute;left:662px;top:207px" width="9" height="10"><path d="M8.5 0.7H0.8L5 5L0.8 9.3H8.5" stroke="#217346" stroke-width="1.1" fill="none"/></svg>
<div style="position:absolute;left:662px;top:200px;width:61px;height:19px;overflow:hidden;"><div style="position:absolute;left:10.40px;top:3px;font-size:13px;line-height:15px;white-space:nowrap;color:#222;">Sum(freight)</div></div>
<svg style="position:absolute;left:724px;top:207px" width="9" height="10"><path d="M8.5 0.7H0.8L5 5L0.8 9.3H8.5" stroke="#217346" stroke-width="1.1" fill="none"/></svg>
<div style="position:absolute;left:724px;top:200px;width:61px;height:19px;overflow:hidden;"><div style="position:absolute;left:10.40px;top:3px;font-size:13px;line-height:15px;white-space:nowrap;color:#222;">Sum(freight)</div></div>
<svg style="position:absolute;left:601px;top:227px" width="9" height="10"><path d="M8.5 0.7H0.8L5 5L0.8 9.3H8.5" stroke="#217346" stroke-width="1.1" fill="none"/></svg>
<div style="position:absolute;left:601px;top:220px;width:60px;height:19px;overflow:hidden;"><div style="position:absolute;left:10.40px;top:3px;font-size:13px;line-height:15px;white-space:nowrap;color:#222;">Sum(freight)</div></div>
<svg style="position:absolute;left:662px;top:227px" width="9" height="10"><path d="M8.5 0.7H0.8L5 5L0.8 9.3H8.5" stroke="#217346" stroke-width="1.1" fill="none"/></svg>
<div style="position:absolute;left:662px;top:220px;width:61px;height:19px;overflow:hidden;"><div style="position:absolute;left:10.40px;top:3px;font-size:13px;line-height:15px;white-space:nowrap;color:#222;">Sum(freight)</div></div>
<svg style="position:absolute;left:724px;top:227px" width="9" height="10"><path d="M8.5 0.7H0.8L5 5L0.8 9.3H8.5" stroke="#217346" stroke-width="1.1" fill="none"/></svg>
<div style="position:absolute;left:724px;top:220px;width:61px;height:19px;overflow:hidden;"><div style="position:absolute;left:10.40px;top:3px;font-size:13px;line-height:15px;white-space:nowrap;color:#222;">Sum(freight)</div></div>
<svg style="position:absolute;left:724px;top:59px" width="14" height="14" viewBox="0 0 14 14"><g fill="#6aa6ee"><circle cx="7" cy="7" r="4.1"/><rect x="5.9" y="1.3" width="2.2" height="11.4" transform="rotate(0 7 7)"/><rect x="5.9" y="1.3" width="2.2" height="11.4" transform="rotate(45 7 7)"/><rect x="5.9" y="1.3" width="2.2" height="11.4" transform="rotate(90 7 7)"/><rect x="5.9" y="1.3" width="2.2" height="11.4" transform="rotate(135 7 7)"/></g><circle cx="7" cy="7" r="1.9" fill="#ffe9b3"/></svg>
<div style="position:absolute;left:250px;top:725px;width:540px;height:25px;background:#f5f5f5;"></div>
<div style="position:absolute;left:250px;top:725px;width:540px;height:1px;background:#ababab;"></div>
<div style="position:absolute;left:418px;top:725px;width:75px;height:25px;background:#fff;"></div>
<div style="position:absolute;left:417px;top:725px;width:1px;height:23px;background:#ababab;"></div>
<div style="position:absolute;left:493px;top:725px;width:1px;height:25px;background:#ababab;"></div>
<div style="position:absolute;left:417px;top:748px;width:77px;height:2px;background:#217346;"></div>
<div style="position:absolute;left:349px;top:729px;width:1px;height:20px;background:#ababab;"></div>
<div style="position:absolute;left:590px;top:729px;width:1px;height:20px;background:#ababab;"></div>
<svg style="position:absolute;left:274px;top:734px" width="6" height="9"><path d="M5 0.5V8.5L0.5 4.5Z" fill="#c8c8c8"/></svg>
<svg style="position:absolute;left:304px;top:734px" width="6" height="9"><path d="M0.5 0.5V8.5L5 4.5Z" fill="#c8c8c8"/></svg>
<div style="position:absolute;left:362.40px;top:730px;font-size:13px;line-height:15px;white-space:nowrap;color:#444;transform:scaleX(0.9358);transform-origin:0 0;">Sheet1</div>
<div style="position:absolute;left:430.70px;top:730px;font-size:13px;line-height:15px;white-space:nowrap;color:#217346;font-weight:bold;transform:scaleX(0.9898);transform-origin:0 0;">Report1</div>
<div style="position:absolute;left:506.60px;top:730px;font-size:13px;line-height:15px;white-space:nowrap;color:#444;transform:scaleX(0.9687);transform-origin:0 0;">DataSource</div>
<svg style="position:absolute;left:623px;top:730px" width="18" height="18"><circle cx="8.8" cy="9" r="7.3" fill="none" stroke="#6a6a6a" stroke-width="1.5"/><path d="M8.8 5V13M4.8 9H12.8" stroke="#6a6a6a" stroke-width="1.9"/></svg>
<div style="position:absolute;left:758px;top:735px;width:2px;height:2px;background:#888;"></div>
<div style="position:absolute;left:758px;top:739px;width:2px;height:2px;background:#888;"></div>
<div style="position:absolute;left:758px;top:743px;width:2px;height:2px;background:#888;"></div>
<div style="position:absolute;left:773px;top:732px;width:14px;height:15px;background:#fff;border:1px solid #aaa;border-radius:2px;"></div>
<svg style="position:absolute;left:777px;top:735px" width="6" height="9"><path d="M5 0.5V8.5L0.5 4.5Z" fill="#666"/></svg>
<div style="position:absolute;left:787px;top:732px;width:10px;height:15px;background:#fff;border:1px solid #aaa;border-left-width:2px;"></div>
</body></html>
